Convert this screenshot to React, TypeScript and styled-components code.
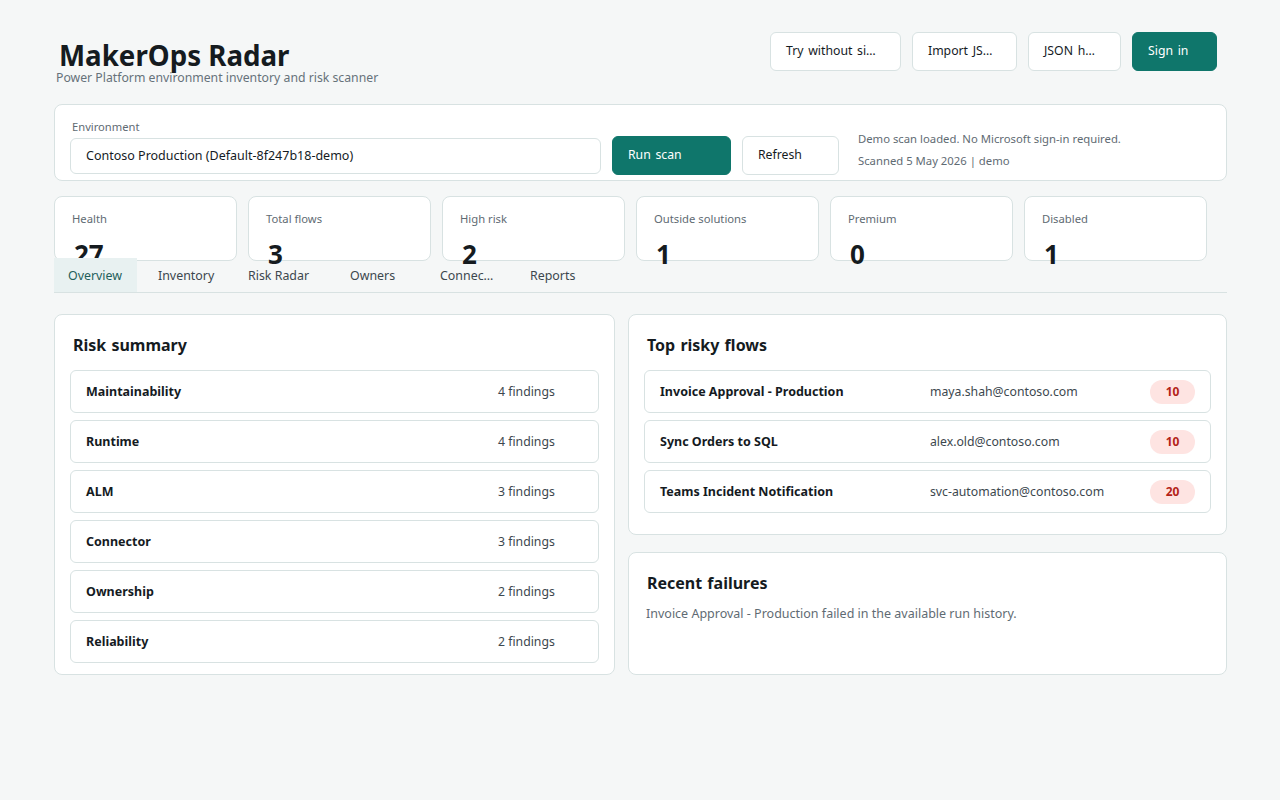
import { createGlobalStyle } from 'styled-components';
import styled from 'styled-components';

const GlobalStyle = createGlobalStyle`
  html, body {
    margin: 0;
    background: #f5f7f7;
    color: #151b1f;
    font-family: "Noto Sans", "Open Sans", sans-serif;
  }
  * { box-sizing: border-box; }
`;

const Page = styled.div`
  display: flex;
  flex-direction: column;
  width: 1173px;
  margin-left: 54px;
  padding-top: 32px;
`;

const Header = styled.header`
  display: flex;
  justify-content: space-between;
  align-items: flex-start;
  height: 72px;
  padding-right: 10px;
`;

const TitleBlock = styled.div`
  display: flex;
  flex-direction: column;
  padding-left: 2px;
`;

const AppTitle = styled.h1`
  margin: 5px 0 0 3px;
  height: 33px;
  font-size: 27.7px;
  line-height: 36px;
  font-weight: 700;
`;

const Subtitle = styled.p`
  margin: 0;
  font-size: 12.25px;
  line-height: 16px;
  color: #66727a;
`;

const Actions = styled.div`
  display: flex;
  gap: 11px;
`;

const Button = styled.button<{ $w: number; $primary?: boolean }>`
  width: ${({ $w }) => $w}px;
  height: 39px;
  padding: 0 20px 3px 15px;
  border-radius: 6px;
  border: 1px solid ${({ $primary }) => ($primary ? '#0f766b' : '#d8e2e2')};
  background: ${({ $primary }) => ($primary ? '#0f766b' : '#ffffff')};
  color: ${({ $primary }) => ($primary ? '#ffffff' : '#151b1f')};
  font: 400 12.25px "Noto Sans", "Open Sans", sans-serif;
  word-spacing: 1.5px;
  text-align: left;
  white-space: nowrap;
  overflow: hidden;
  text-overflow: ellipsis;
`;

const Card = styled.section`
  background: #ffffff;
  border: 1px solid #d8e2e2;
  border-radius: 8px;
`;

const ScanCard = styled(Card)`
  display: flex;
  align-items: flex-start;
  height: 77px;
  padding: 14px 16px 0 15px;
`;

const Field = styled.div`
  display: flex;
  flex-direction: column;
  width: 531px;
  margin-right: 11px;
`;

const FieldLabel = styled.label`
  margin-left: 2px;
  font-size: 11.2px;
  line-height: 16px;
  color: #5f6b73;
`;

const Select = styled.div`
  display: flex;
  align-items: center;
  height: 36px;
  margin-top: 3px;
  padding: 0 0 2px 15px;
  border: 1px solid #d8e2e2;
  border-radius: 6px;
  font-size: 12.5px;
`;

const ScanButtons = styled.div`
  display: flex;
  gap: 11px;
  margin-top: 17px;
`;

const ScanStatus = styled.div`
  display: flex;
  flex-direction: column;
  gap: 6px;
  margin: 12px 0 0 19px;
  font-size: 11.3px;
  line-height: 16px;
  color: #5f6b73;
`;

const Stats = styled.div`
  display: flex;
  gap: 11px;
  margin-top: 15px;
`;

const StatCard = styled(Card)`
  width: 183px;
  height: 65px;
  padding: 14px 17px 0;
`;

const StatLabel = styled.div`
  font-size: 11.25px;
  line-height: 16px;
  color: #5f6b73;
`;

const StatValue = styled.div`
  margin: 11px 0 0 2px;
  font-size: 26px;
  line-height: 32px;
  font-weight: 700;
`;

const Tabs = styled.nav`
  position: relative;
  display: flex;
  gap: 7px;
  height: 35px;
  margin-top: -3px;
  border-bottom: 1px solid #d8e2e2;
`;

const Tab = styled.div<{ $w: number; $active?: boolean }>`
  width: ${({ $w }) => $w}px;
  height: 34px;
  padding: 1px 12px 0 14px;
  font-size: 12.4px;
  line-height: 34px;
  white-space: nowrap;
  overflow: hidden;
  text-overflow: ellipsis;
  color: ${({ $active }) => ($active ? '#1f5f5b' : '#3c474e')};
  background: ${({ $active }) => ($active ? '#e8f1f1' : 'transparent')};
`;

const Columns = styled.div`
  display: grid;
  grid-template-columns: 561px 599px;
  gap: 13px;
  margin-top: 21px;
`;

const Column = styled.div`
  display: flex;
  flex-direction: column;
  gap: 17px;
`;

const Panel = styled(Card)<{ $h: number }>`
  height: ${({ $h }) => $h}px;
  padding: 18px 15px 15px;
`;

const PanelTitle = styled.h2`
  margin: 0 0 13px 3px;
  font-size: 16px;
  line-height: 24px;
  font-weight: 700;
  word-spacing: 1px;
`;

const RowList = styled.div`
  display: flex;
  flex-direction: column;
  gap: 7px;
`;

const Row = styled.div`
  display: flex;
  align-items: center;
  height: 43px;
  padding: 0 15px;
  border: 1px solid #d8e2e2;
  border-radius: 6px;
  font-size: 12.25px;
`;

const RowName = styled.strong<{ $w: number }>`
  width: ${({ $w }) => $w}px;
  flex: none;
  font-size: 12.5px;
  font-weight: 700;
`;

const Findings = styled.span`
  color: #3c474e;
`;

const Owner = styled.span`
  flex: 1;
  color: #3c474e;
`;

const ScoreBadge = styled.span`
  width: 45px;
  height: 24px;
  border-radius: 12px;
  background: #fee4e2;
  color: #b42318;
  font-size: 12px;
  font-weight: 700;
  line-height: 24px;
  text-align: center;
`;

const Note = styled.p`
  margin: -3px 0 0 2px;
  font-size: 12.5px;
  line-height: 18px;
  color: #5f6b73;
`;

const stats = [
  ['Health', '27'],
  ['Total flows', '3'],
  ['High risk', '2'],
  ['Outside solutions', '1'],
  ['Premium', '0'],
  ['Disabled', '1'],
];

const tabs: [string, number][] = [
  ['Overview', 83],
  ['Inventory', 83],
  ['Risk Radar', 95],
  ['Owners', 83],
  ['Connectors', 83],
  ['Reports', 83],
];

const summary = [
  ['Maintainability', '4 findings'],
  ['Runtime', '4 findings'],
  ['ALM', '3 findings'],
  ['Connector', '3 findings'],
  ['Ownership', '2 findings'],
  ['Reliability', '2 findings'],
];

const flows = [
  ['Invoice Approval - Production', 'maya.shah@contoso.com', '10'],
  ['Sync Orders to SQL', 'alex.old@contoso.com', '10'],
  ['Teams Incident Notification', 'svc-automation@contoso.com', '20'],
];

export default function App() {
  return (
    <>
      <GlobalStyle />
      <Page>
        <Header>
          <TitleBlock>
            <AppTitle>MakerOps Radar</AppTitle>
            <Subtitle>Power Platform environment inventory and risk scanner</Subtitle>
          </TitleBlock>
          <Actions>
            <Button $w={131}>Try without sign-in</Button>
            <Button $w={105}>Import JSON</Button>
            <Button $w={93}>JSON help</Button>
            <Button $w={85} $primary>Sign in</Button>
          </Actions>
        </Header>

        <ScanCard>
          <Field>
            <FieldLabel>Environment</FieldLabel>
            <Select>Contoso Production (Default-8f247b18-demo)</Select>
          </Field>
          <ScanButtons>
            <Button $w={119} $primary>Run scan</Button>
            <Button $w={97}>Refresh</Button>
          </ScanButtons>
          <ScanStatus>
            <span>Demo scan loaded. No Microsoft sign-in required.</span>
            <span>Scanned 5 May 2026 | demo</span>
          </ScanStatus>
        </ScanCard>

        <Stats>
          {stats.map(([label, value]) => (
            <StatCard key={label}>
              <StatLabel>{label}</StatLabel>
              <StatValue>{value}</StatValue>
            </StatCard>
          ))}
        </Stats>

        <Tabs>
          {tabs.map(([label, w], i) => (
            <Tab key={label} $w={w} $active={i === 0}>{label}</Tab>
          ))}
        </Tabs>

        <Columns>
          <Column>
            <Panel $h={361}>
              <PanelTitle>Risk summary</PanelTitle>
              <RowList>
                {summary.map(([name, count]) => (
                  <Row key={name}>
                    <RowName $w={412}>{name}</RowName>
                    <Findings>{count}</Findings>
                  </Row>
                ))}
              </RowList>
            </Panel>
          </Column>
          <Column>
            <Panel $h={221}>
              <PanelTitle>Top risky flows</PanelTitle>
              <RowList>
                {flows.map(([name, owner, score]) => (
                  <Row key={name}>
                    <RowName $w={270}>{name}</RowName>
                    <Owner>{owner}</Owner>
                    <ScoreBadge>{score}</ScoreBadge>
                  </Row>
                ))}
              </RowList>
            </Panel>
            <Panel $h={123}>
              <PanelTitle>Recent failures</PanelTitle>
              <Note>Invoice Approval - Production failed in the available run history.</Note>
            </Panel>
          </Column>
        </Columns>
      </Page>
    </>
  );
}
